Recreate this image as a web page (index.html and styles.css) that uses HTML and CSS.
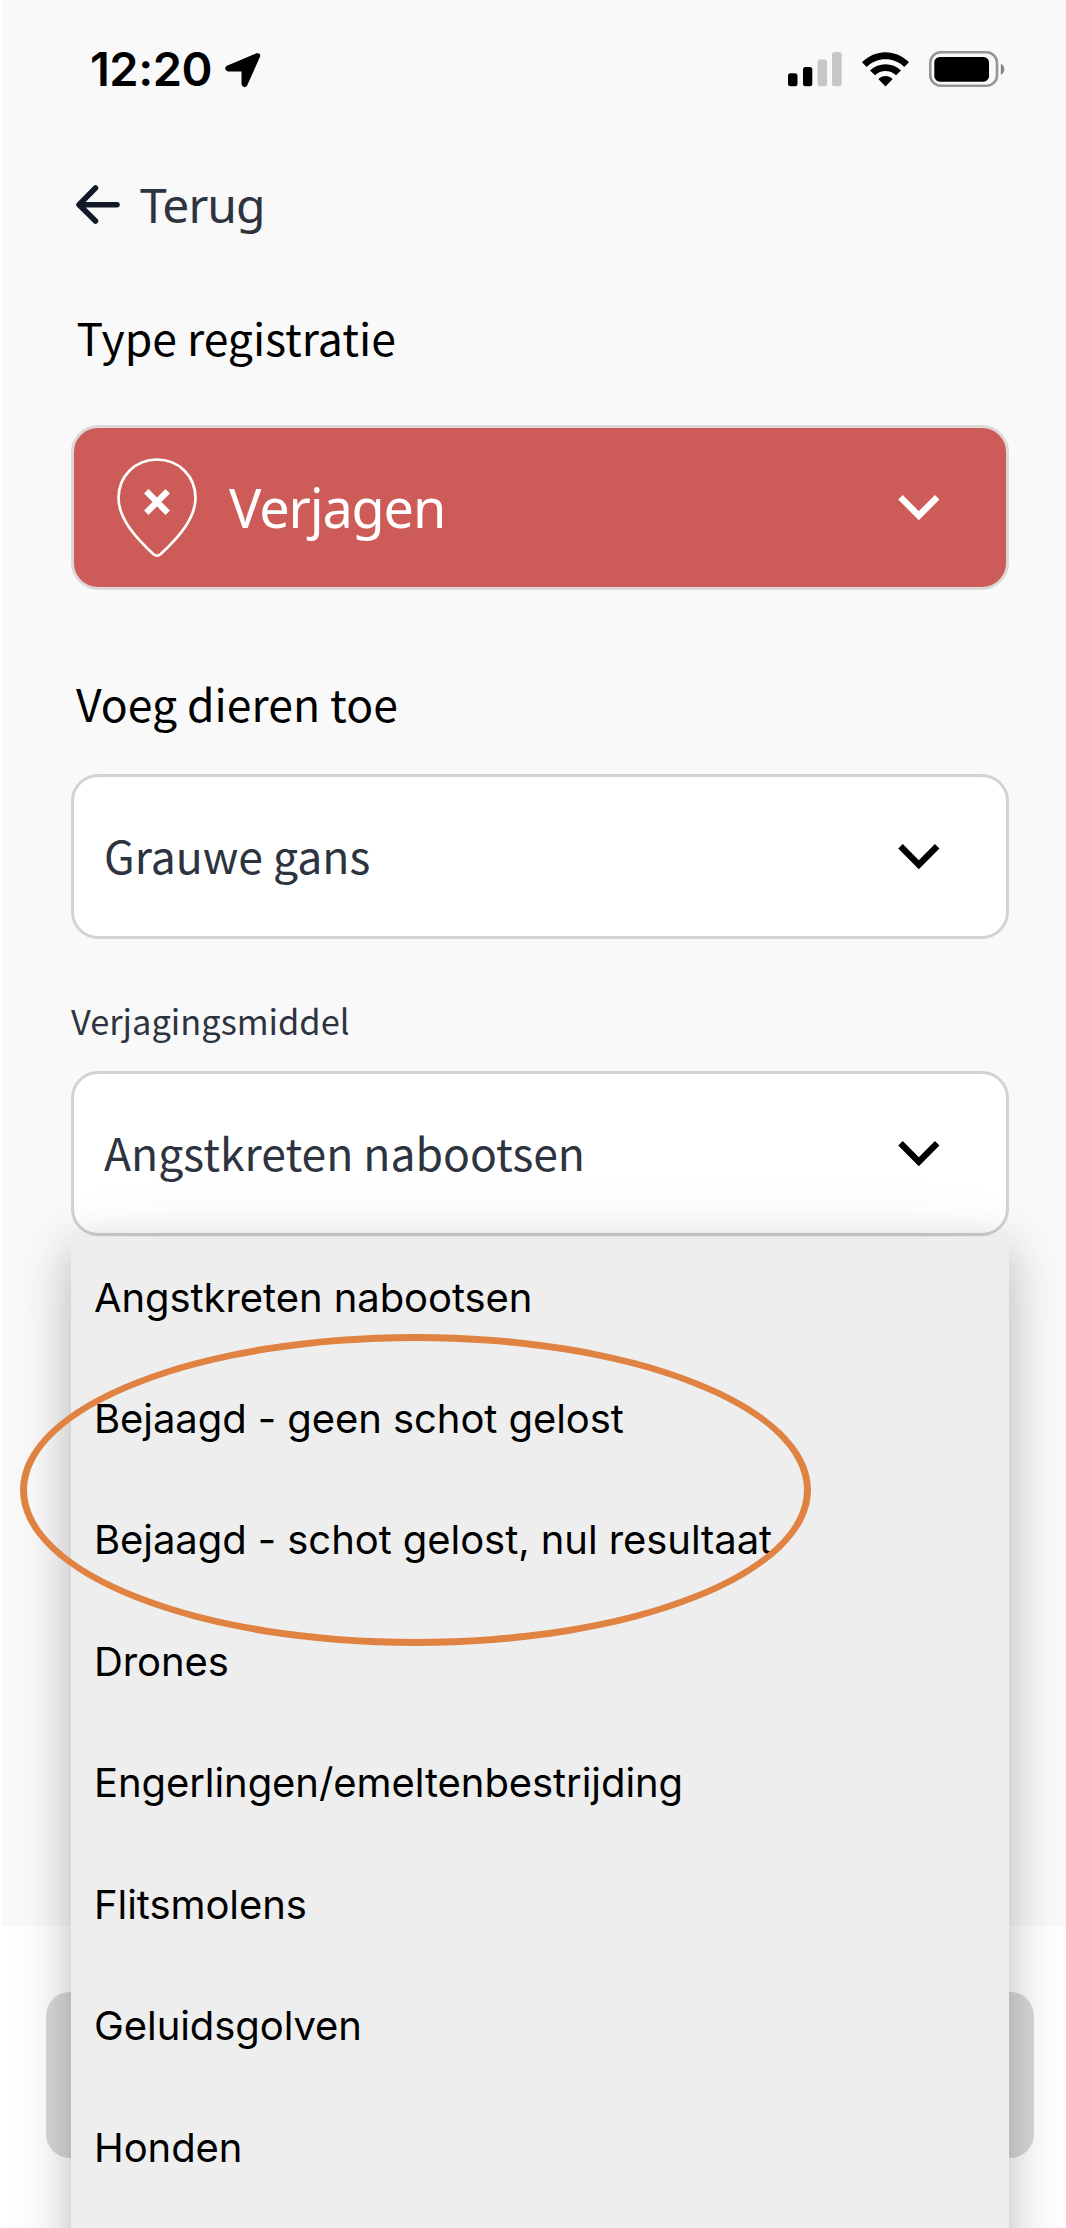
FILE: index.html
```html
<!DOCTYPE html>
<html lang="nl">
<head>
<meta charset="utf-8">
<title>Registratie</title>
<link rel="stylesheet" href="styles.css">
</head>
<body>
<div class="screen">
  <main class="content">
    <header class="status">
      <span class="clock">12:20</span>
      <svg class="locate" width="38" height="38" viewBox="0 0 38 38"><path d="M3.500 16.200 32.500 3.800Q35.600 3 34.400 5.700L22 33.500Q20 36 19 33V19H4.500Q1.500 18 3.500 16.200Z" fill="#000" stroke="#000" stroke-width="3" stroke-linejoin="round"/></svg>
      <svg class="signal" width="54" height="35" viewBox="0 0 54 35"><rect y="21.300" width="9.500" height="13" rx="2.500"/><rect x="15" y="15" width="9.300" height="19.300" rx="2.500"/><g fill="#c7c7c7"><rect x="29.500" y="7.600" width="9.600" height="26.700" rx="2.500"/><rect x="44" y="0" width="9.700" height="34.300" rx="2.500"/></g></svg>
      <svg class="wifi" width="47" height="35" viewBox="0 0 47 35"><path d="M0 10.300C13-3.200 34-3.200 47 10.300L42.200 15C32 4.800 15 4.800 4.800 15Z"/><path d="M8 18.500C16.500 10 30.500 10 39 18.500L34 23.300C28.200 17.500 18.800 17.500 13 23.300Z"/><path d="M16.300 27C20.500 23 26.500 23 30.700 27L23.500 34.500Z"/></svg>
      <svg class="battery" width="76" height="36" viewBox="0 0 76 36"><rect x="1.300" y="1.300" width="66.700" height="33.400" rx="10.500" fill="none" stroke="#969696" stroke-width="2.600"/><rect x="5.300" y="6" width="54.700" height="24.700" rx="5.500"/><path d="M71.800 12.700C76.500 14.500 76.500 22 71.800 23.800Z" fill="#858585"/></svg>
    </header>

    <nav class="back">
      <svg width="46" height="42" viewBox="0 0 46 42"><path d="M20.500 4 4 20.700 20.500 37M4.500 20.700H42" fill="none" stroke="#111827" stroke-width="5.500" stroke-linecap="round" stroke-linejoin="round"/></svg>
      <span class="back-text">Terug</span>
    </nav>

    <h2 class="heading heading-type">Type registratie</h2>
    <div class="select select-red">
      <svg class="pin" width="82" height="101" viewBox="0 0 82 101"><path d="M41 2.500C19.500 2.500 2.500 19 2.500 41C2.500 61 19 80 37.500 97.200Q41 100 44.500 97.200C63 80 79.500 61 79.500 41C79.500 19 62.500 2.500 41 2.500Z" fill="none" stroke="#fff" stroke-width="2.700"/><path d="M30.300 34.300 51.700 55.700M51.700 34.300 30.300 55.700" stroke="#fff" stroke-width="6.200"/></svg>
      <span class="value">Verjagen</span>
      <svg class="chevron" width="42" height="26" viewBox="0 0 42 26"><path d="M2.500 2.300 20.800 20.700 39.200 2.300"/></svg>
    </div>

    <h2 class="heading heading-animals">Voeg dieren toe</h2>
    <div class="select">
      <span class="value value-animal">Grauwe gans</span>
      <svg class="chevron" width="42" height="26" viewBox="0 0 42 26"><path d="M2.500 2.300 20.800 20.700 39.200 2.300"/></svg>
    </div>

    <div class="label">Verjagingsmiddel</div>
    <div class="select select-open">
      <span class="value value-method">Angstkreten nabootsen</span>
      <svg class="chevron" width="42" height="26" viewBox="0 0 42 26"><path d="M2.500 2.300 20.800 20.700 39.200 2.300"/></svg>
      <ul class="menu">
        <li>Angstkreten nabootsen</li>
        <li>Bejaagd - geen schot gelost</li>
        <li>Bejaagd - schot gelost, nul resultaat</li>
        <li>Drones</li>
        <li>Engerlingen/emeltenbestrijding</li>
        <li>Flitsmolens</li>
        <li>Geluidsgolven</li>
        <li>Honden</li>
      </ul>
      <div class="marker"></div>
    </div>
  </main>
  <footer class="footer"><div class="button"></div></footer>
</div>
</body>
</html>
```

FILE: styles.css
```css
* { box-sizing: border-box; }
body { margin: 0; background: #fff; }
svg { display: block; flex: none; }

.screen {
  display: flex;
  flex-direction: column;
  height: 2228px;
  overflow: hidden;
  font-family: "Noto Sans CJK SC", "Noto Sans", sans-serif;
}
.content {
  height: 1926px;
  flex: none;
  margin-left: 2px;
  padding: 0 57px 0 69px;
  background: #f9f9f9;
}

.status {
  display: flex;
  align-items: center;
  height: 138px;
  padding: 0 4px 0 19px;
}
.clock {
  width: 134px;
  font: 600 47px/60px Inter, sans-serif;
  letter-spacing: -.5px;
  white-space: nowrap;
}
.locate { margin-top: 2px; }
.signal { margin-left: auto; }
.wifi { margin-left: 20px; }
.battery { margin-left: 20px; }

.back {
  display: flex;
  align-items: center;
  gap: 19px;
  height: 134px;
  padding-left: 4px;
  font: 400 48px/60px "Noto Sans", sans-serif;
  color: #2d3440;
}
.back-text { letter-spacing: -1px; }

.heading {
  margin: 35px 0 58px;
  padding-left: 5.5px;
  font-size: 44.5px;
  font-weight: 400;
  line-height: 60px;
  color: #000;
}
.heading-animals { margin: 83px 0 41px; padding-left: 5px; }

.select {
  position: relative;
  display: flex;
  align-items: center;
  height: 165px;
  padding: 0 66px 0 30px;
  border: 3px solid #d2d2d2;
  border-radius: 27px;
  background: #fff;
  color: #2d3440;
  font-size: 44.5px;
  line-height: 60px;
  white-space: nowrap;
}
.value { margin-bottom: 3px; }
.chevron {
  margin-left: auto;
  fill: none;
  stroke: #000;
  stroke-width: 6.4px;
}
.select-red {
  padding-left: 42px;
  background: #cd5c58;
  border-color: #dcd8d8;
  color: #fff;
  font: 400 54px/70px "Noto Sans", sans-serif;
}
.select-red .value { margin: 0 0 2px 31px; letter-spacing: -1.15px; }
.select-red .chevron { stroke: #fff; }

.label {
  margin: 61px 0 31px;
  font-size: 34.4px;
  line-height: 40px;
  color: #2d3440;
}

.menu {
  position: absolute;
  top: 162.5px;
  left: -3px;
  width: 938px;
  height: 1100px;
  margin: 0;
  padding: 0 23px;
  list-style: none;
  border-radius: 5px 5px 0 0;
  background: #eee;
  box-shadow: 0 12px 46px rgba(0, 0, 0, .24), 0 8px 90px rgba(0, 0, 0, .05);
  font: 400 40px/121.43px Inter, sans-serif;
  letter-spacing: -.07px;
  color: #000;
}
.marker {
  position: absolute;
  top: 260px;
  left: -54px;
  width: 791px;
  height: 312px;
  border: 7px solid #df8242;
  border-radius: 50%;
}

.footer { flex: 1; padding: 66px 32px 0 46px; }
.button { height: 166px; border-radius: 24px; background: #dadada; }
```
